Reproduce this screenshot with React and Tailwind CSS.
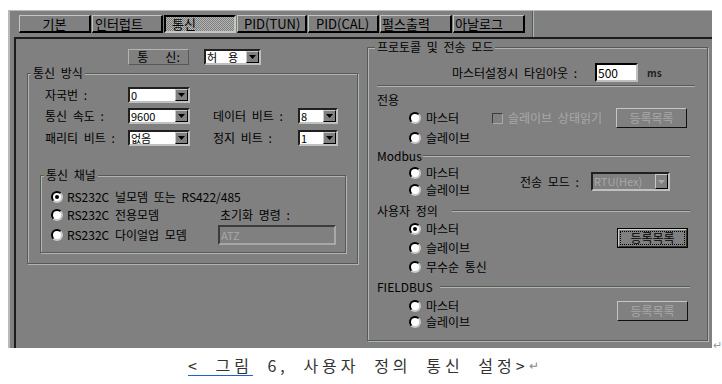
import React from "react";

const font = "font-['Noto_Sans_CJK_KR','Noto_Sans_CJK_JP',sans-serif]";

const Arrow = ({ disabled }) => (
  <div className="w-[13px] h-full flex items-center justify-center bg-[#808080] border border-t-[#c8c8c8] border-l-[#c8c8c8] border-r-black border-b-black shrink-0">
    <svg width="7" height="4" viewBox="0 0 7 4">
      <path d="M0 0h7L3.5 4z" fill={disabled ? "#a8a8a8" : "#000"} />
    </svg>
  </div>
);

const Select = ({ value, className = "", disabled }) => (
  <div
    className={`flex border-2 border-t-[#202020] border-l-[#202020] border-r-[#c0c0c0] border-b-[#c0c0c0] ${
      disabled ? "bg-[#808080] text-[#a8a8a8]" : "bg-white text-black"
    } ${className}`}
  >
    <div className="flex-1 pl-[1px] text-[11px] leading-[11px] flex items-center whitespace-pre">
      {value}
    </div>
    <Arrow disabled={disabled} />
  </div>
);

const Radio = ({ checked, label, gap = "ml-[5px]" }) => (
  <div className="flex items-center h-[14px]">
    <div className="w-[12px] h-[12px] rounded-full bg-white border-2 border-t-black border-l-black border-r-[#c8c8c8] border-b-[#c8c8c8] flex items-center justify-center shrink-0">
      {checked && <div className="w-[4px] h-[4px] rounded-full bg-black" />}
    </div>
    <span className={`${gap} text-[12px] leading-[14px] whitespace-nowrap`}>{label}</span>
  </div>
);

const Btn = ({ focused }) =>
  focused ? (
    <div className="w-[71px] h-[20px] border border-black">
      <div className="w-full h-full border border-t-[#c8d0c8] border-l-[#c8d0c8] border-r-[#303030] border-b-[#303030] p-[1px]">
        <div className="w-full h-full border border-dotted border-black flex items-center justify-center text-[12px] leading-[12px]">
          등록목록
        </div>
      </div>
    </div>
  ) : (
    <div className="w-[71px] h-[20px] border border-t-[#c0c8c0] border-l-[#c0c8c0] border-r-[#101010] border-b-[#101010] flex items-center justify-center text-[12px] leading-[12px] text-[#a8a8a8]">
      등록목록
    </div>
  );

const Line = ({ className = "" }) => (
  <div className={`h-[2px] border-t border-t-[#555c55] border-b border-b-[#aeb6ae] ${className}`} />
);

const Header = ({ label, w }) => (
  <div className="flex items-center h-[14px] ml-[9px] mr-[17px]">
    <div className={`${w} text-[12px] leading-[14px] whitespace-nowrap`}>{label}</div>
    <Line className="flex-1" />
  </div>
);

const group =
  "border border-[#555c55] shadow-[inset_1px_1px_0_#aeb6ae,1px_1px_0_#aeb6ae]";

const Tab = ({ label, w, pad, selected }) => (
  <div
    className={`${w} ${pad} h-[18px] flex items-center text-[13px] leading-[14px] whitespace-nowrap ${
      selected
        ? "border-2 border-t-black border-l-black border-r-[#c0c8c0] border-b-[#c0c8c0] bg-[image:repeating-conic-gradient(#7a7a7a_0_25%,#b8b8b8_0_50%)] bg-[length:2px_2px]"
        : "border border-t-[#c0c8c0] border-l-[#c0c8c0] border-r-black border-b-black border-r-2 border-b-2"
    }`}
  >
    {label}
  </div>
);

export default function App() {
  return (
    <div className={`w-[722px] h-[384px] bg-white text-black overflow-hidden [word-spacing:3px] ${font}`}>
      <div className="flex items-end pt-[10px] pl-[8px]">
        <div className="w-[709px] h-[338px] bg-[#808080] border-t border-l-2 border-[#b4bcb4] flex flex-col">
          {/* tabs */}
          <div className="h-[26px] flex items-start pt-[4px] pl-[9px] gap-[1px]">
            <Tab label="기본" w="w-[72px]" pad="justify-center" />
            <Tab label="인터럽트" w="w-[71px]" pad="pl-[2px]" />
            <Tab label="통신" w="w-[72px]" pad="pl-[6px]" selected />
            <Tab label="PID(TUN)" w="w-[70px]" pad="pl-[6px]" />
            <Tab label="PID(CAL)" w="w-[71px]" pad="pl-[7px]" />
            <Tab label="펄스출력" w="w-[72px]" pad="pl-[1px]" />
            <Tab label="아날로그" w="w-[72px]" pad="pl-[1px]" />
            <div className="ml-[6px] -mt-[4px] h-[26px] w-[2px] border-l border-l-[#555c55] border-r border-r-[#aeb6ae]" />
          </div>

          {/* main panel */}
          <div className="flex-1 ml-[4px] border-t-2 border-l-2 border-[#1c1c1c] flex items-start pl-[11px]">
            {/* left column */}
            <div className="w-[331px] mt-[10px] flex flex-col">
              <div className="flex items-center h-[16px]">
                <div className="ml-[101px] w-[61px] h-[16px] border border-t-[#b4b4b4] border-l-[#b4b4b4] border-r-[#585858] border-b-[#585858] flex items-center justify-center text-[12px] leading-[12px] whitespace-pre">
                  통{"   "}신:
                </div>
                <Select value={"허  용"} className="ml-[15px] w-[57px] h-[16px]" />
              </div>

              <fieldset className={`mt-[1px] h-[198px] ${group}`}>
                <legend className="ml-[3px] px-[2px] bg-[#808080] text-[12px] leading-[14px]">통신 방식</legend>

                <div className="mt-[7px] flex items-center h-[16px] ml-[17px]">
                  <div className="w-[83px] text-[12px] leading-[14px]">자국번 :</div>
                  <Select value="0" className="w-[62px] h-[16px]" />
                </div>
                <div className="mt-[5px] flex items-center h-[16px] ml-[17px]">
                  <div className="w-[83px] text-[12px] leading-[14px]">통신 속도 :</div>
                  <Select value="9600" className="w-[62px] h-[16px]" />
                  <div className="ml-[23px] w-[85px] text-[12px] leading-[14px]">데이터 비트 :</div>
                  <Select value="8" className="w-[40px] h-[16px]" />
                </div>
                <div className="mt-[6px] flex items-center h-[16px] ml-[17px]">
                  <div className="w-[83px] text-[12px] leading-[14px]">패리티 비트 :</div>
                  <Select value="없음" className="w-[62px] h-[16px]" />
                  <div className="ml-[23px] w-[85px] text-[12px] leading-[14px]">정지 비트 :</div>
                  <Select value="1" className="w-[40px] h-[16px]" />
                </div>

                <fieldset className={`mt-[22px] ml-[12px] w-[306px] h-[85px] ${group}`}>
                  <legend className="ml-[3px] px-[2px] bg-[#808080] text-[12px] leading-[14px]">통신 채널</legend>
                  <div className="mt-[8px] ml-[10px]">
                    <Radio checked label="RS232C 널모뎀 또는 RS422/485" gap="ml-[4px]" />
                  </div>
                  <div className="mt-[4px] ml-[10px] flex items-start">
                    <div className="w-[167px] flex flex-col gap-[6px]">
                      <Radio label="RS232C 전용모뎀" gap="ml-[4px]" />
                      <Radio label="RS232C 다이얼업 모뎀" gap="ml-[4px]" />
                    </div>
                    <div className="flex flex-col">
                      <div className="ml-[2px] h-[14px] text-[12px] leading-[14px] whitespace-nowrap">초기화 명령 :</div>
                      <div className="mt-[3px] w-[118px] h-[20px] border-2 border-t-[#3c3c3c] border-l-[#3c3c3c] border-r-[#a8a8a8] border-b-[#a8a8a8] text-[#a8a8a8] text-[11px] leading-[16px] pl-[1px]">
                        ATZ
                      </div>
                    </div>
                  </div>
                </fieldset>
              </fieldset>
            </div>

            {/* right column */}
            <fieldset className={`ml-[9px] mt-[1px] w-[341px] h-[301px] ${group}`}>
              <legend className="ml-[7px] px-[2px] bg-[#808080] text-[12px] leading-[14px]">프로토콜 및 전송 모드</legend>

              <div className="mt-[9px] flex items-center h-[19px] ml-[84px]">
                <div className="w-[143px] text-[12px] leading-[14px] whitespace-nowrap">마스터설정시 타임아웃 :</div>
                <div className="w-[43px] h-[19px] bg-white border-2 border-t-black border-l-black border-r-[#c0c0c0] border-b-[#c0c0c0] text-[12px] leading-[15px] pl-[1px]">
                  500
                </div>
                <div className="ml-[9px] text-[10px] leading-[12px] font-bold text-[#222]">ms</div>
              </div>
              <Line className="mt-[3px] ml-[9px] w-[318px]" />

              <div className="mt-[6px] ml-[9px] h-[14px] text-[12px] leading-[14px]">전용</div>
              <div className="mt-[1px] ml-[41px] h-[20px] flex items-center">
                <div className="w-[83px]">
                  <Radio label="마스터" />
                </div>
                <div className="w-[11px] h-[11px] border border-t-[#3c3c3c] border-l-[#3c3c3c] border-r-[#a8a8a8] border-b-[#a8a8a8]" />
                <div className="ml-[5px] w-[108px] text-[12px] leading-[14px] text-[#a8a8a8] whitespace-nowrap">
                  슬레이브 상태읽기
                </div>
                <Btn />
              </div>
              <div className="mt-[3px] ml-[41px]">
                <Radio label="슬레이브" />
              </div>

              <div className="mt-[4px]">
                <Header label="Modbus" w="w-[46px]" />
              </div>
              <div className="mt-[3px] ml-[41px] flex items-center">
                <div className="w-[111px] flex flex-col gap-[3px]">
                  <Radio label="마스터" />
                  <Radio label="슬레이브" />
                </div>
                <div className="w-[71px] text-[12px] leading-[14px] whitespace-nowrap">전송 모드 :</div>
                <Select value="RTU(Hex)" className="w-[79px] h-[19px]" disabled />
              </div>

              <div className="mt-[7px]">
                <Header label="사용자 정의" w="w-[75px]" />
              </div>
              <div className="mt-[4px] ml-[41px] flex items-start">
                <div className="w-[208px] flex flex-col gap-[5px]">
                  <Radio checked label="마스터" />
                  <Radio label="슬레이브" />
                  <Radio label="무수순 통신" />
                </div>
                <div className="mt-[6px]">
                  <Btn focused />
                </div>
              </div>

              <div className="mt-[6px]">
                <Header label="FIELDBUS" w="w-[63px]" />
              </div>
              <div className="mt-[5px] ml-[41px] flex items-start">
                <div className="w-[208px] flex flex-col gap-[2px]">
                  <Radio label="마스터" />
                  <Radio label="슬레이브" />
                </div>
                <div className="mt-[2px]">
                  <Btn />
                </div>
              </div>
            </fieldset>
          </div>
        </div>
        <div className="ml-[1px] mb-[-2px] text-[11px] leading-[12px] text-[#9a9a9a]">↵</div>
      </div>

      {/* caption */}
      <div className="mt-[7px] pl-[188px] flex items-center h-[20px] text-[16px] leading-[20px] text-[#333] tracking-[4px] [word-spacing:7px] whitespace-nowrap">
        <span className="underline decoration-[#1f5fd0] underline-offset-[3px]">&lt; 그림</span>
        <span>&nbsp;6, 사용자 정의 통신 설정&gt;</span>
        <span className="text-[12px] text-[#888] tracking-normal">↵</span>
      </div>
    </div>
  );
}
